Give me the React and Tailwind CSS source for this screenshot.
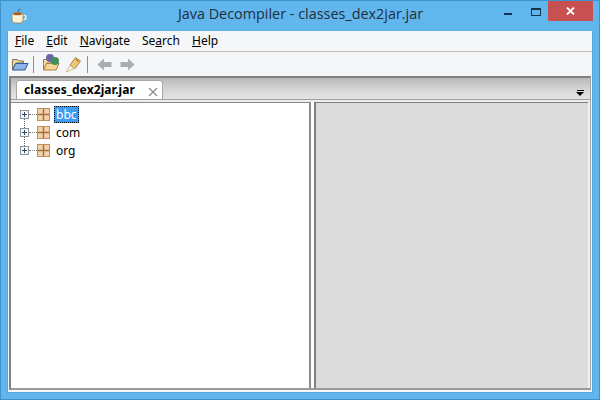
import React from "react";

const FolderOpen = () => (
  <svg width="18" height="16" viewBox="0 0 18 16">
    <path d="M1.500 3.500h5l1 1.500h5v2H5L2.500 13.500h-1z" fill="#e9d9a8" stroke="#8a7444" />
    <path d="M4.500 7.500h12.500l-3 6.500H1.500z" fill="#8fb4e6" stroke="#2c5a9e" />
  </svg>
);

const FolderTan = () => (
  <svg width="18" height="16" viewBox="0 0 18 16">
    <path d="M1.500 3.500h5l1 1.500h5v2H5L2.500 13.500h-1z" fill="#f0dca8" stroke="#a07a3c" />
    <path d="M4.500 7.500h12.500l-3 6.500H1.500z" fill="#f6d694" stroke="#a8803c" />
  </svg>
);

const PackageIcon = () => (
  <svg width="13" height="13" viewBox="0 0 13 13">
    <rect x="0.500" y="0.500" width="12" height="12" fill="#f2d2ac" stroke="#bd8f5c" />
    <path d="M6.500 1v11M1 6.500h11" stroke="#a86e38" strokeWidth="1.400" />
  </svg>
);

const TreeRow = ({ label, selected, last }) => (
  <div className="flex items-center h-[18px] relative">
    <div className="w-[9px] h-[9px] ml-[9px] border border-[#8a949c] bg-[#f6f6f6] flex items-center justify-center relative shrink-0">
      <div className="w-[5px] h-px bg-[#33475f]" />
      <div className="w-px h-[5px] bg-[#33475f] absolute left-[3px] top-[1px]" />
    </div>
    <div className="w-[8px] border-t border-dotted border-[#777]" />
    <div className="flex shrink-0"><PackageIcon /></div>
    {selected ? (
      <span className="ml-[4px] px-[1px] h-[17px] leading-[15px] bg-[#3d9bf3] text-white border border-dotted border-black">{label}</span>
    ) : (
      <span className="ml-[5px] px-[1px] leading-[15px]">{label}</span>
    )}
    {!last && <div className="absolute left-[13px] top-[14px] h-[9px] border-l border-dotted border-[#555]" />}
  </div>
);

export default function App() {
  return (
    <div className="w-[600px] h-[400px] bg-[#62b6ee] border border-[#3f93cc] flex flex-col overflow-hidden text-[12px] text-black font-['Liberation_Sans',sans-serif]">
      {/* title bar */}
      <div className="h-[30px] flex shrink-0">
        <div className="w-[30px] pl-[10px] pt-[7px] shrink-0">
          <svg width="16" height="17" viewBox="0 0 16 17">
            <path d="M7 5 Q7 2 9 1" fill="none" stroke="#3f6a8c" strokeWidth="1.200" />
            <path d="M12 7.500h1.500q1.500 0 1.500 2t-3 2.500" fill="none" stroke="#f5e9c8" strokeWidth="1.500" />
            <path d="M1 6q0-1.500 5.500-1.500T12 6v6q0 3-3 3H4q-3 0-3-3z" fill="#fbf1d4" stroke="#8a7444" strokeWidth="0.700" />
            <ellipse cx="6.500" cy="6" rx="4.500" ry="1.200" fill="#b8541e" />
          </svg>
        </div>
        <div className="flex-1 text-center pt-[4px] pl-[78px] text-[14.4px] leading-[18px] text-[#1f2f3c] font-['Open_Sans',sans-serif] whitespace-nowrap">
          Java Decompiler - classes_dex2jar.jar
        </div>
        <div className="w-[32px] flex justify-center pt-[12px] shrink-0">
          <div className="w-[8px] h-[2px] bg-[#15354f]" />
        </div>
        <div className="w-[23px] flex justify-center pt-[7px] shrink-0">
          <div className="w-[10px] h-[8px] border border-t-2 border-[#15354f]" />
        </div>
        <div className="w-[45px] h-[20px] bg-[#c75050] flex items-center justify-center ml-px mr-[6px] shrink-0">
          <svg width="9" height="8" viewBox="0 0 9 8">
            <path d="M1 0.500 8 7.500M8 0.500 1 7.500" stroke="#fff" strokeWidth="1.800" />
          </svg>
        </div>
      </div>

      {/* client area */}
      <div className="mx-[6px] mb-[6px] flex-1 min-h-0 flex flex-col bg-[#f4f6f8] border-x border-b border-[#56a6dd]">
        {/* menu */}
        <div className="h-[21px] flex items-center gap-[12px] pl-[7px] border-b border-[#bdbdbd] shrink-0 font-['Noto_Sans',sans-serif]">
          <span><u>F</u>ile</span>
          <span><u>E</u>dit</span>
          <span><u>N</u>avigate</span>
          <span>Se<u>a</u>rch</span>
          <span><u>H</u>elp</span>
        </div>
        {/* toolbar */}
        <div className="h-[24px] flex items-center pl-[3px] shrink-0">
          <FolderOpen />
          <div className="w-px h-[17px] bg-[#8e8e8e] ml-[4px] mr-[8px]" />
          <div className="relative">
            <FolderTan />
            <div className="absolute left-[4px] top-[-2px] w-[8px] h-[8px] rounded-full bg-[#6c64a8]" />
            <div className="absolute left-[9px] top-[1px] w-[8px] h-[8px] rounded-full bg-[#3f8f5c]" />
          </div>
          <svg className="ml-[5px]" width="17" height="17" viewBox="0 0 17 17">
            <path d="M10.500 1.500l5 3.500-5.500 7.500-5-3.500z" fill="#f0c878" stroke="#a8843c" />
            <path d="M1 16l4-6.500 4.500 3z" fill="#faf6e0" stroke="#c8c09c" />
            <path d="M11 3.500l2.500 2" stroke="#b8742c" strokeWidth="1.500" />
          </svg>
          <div className="w-px h-[17px] bg-[#8e8e8e] ml-[5px] mr-[9px]" />
          <svg width="15" height="13" viewBox="0 0 15 13">
            <path d="M7 0.500v3.500h7.500v5H7v3.500L0.500 6.500z" fill="#a9aeb0" />
          </svg>
          <svg className="ml-[8px]" width="15" height="13" viewBox="0 0 15 13">
            <path d="M8 0.500v3.500H0.500v5H8v3.500l6.500-6z" fill="#a9aeb0" />
          </svg>
        </div>

        {/* tab pane */}
        <div className="flex-1 min-h-0 mx-px mb-[2px] border-t-2 border-l-2 border-r border-b-2 border-t-[#808080] border-l-[#808080] border-r-[#a4a4a4] border-b-[#9a9a9a] flex flex-col bg-[#f0f0f0]">
          <div className="h-[21px] flex items-end pl-[5px] bg-gradient-to-b from-[#b8b8b8] via-[#d4d4d4] to-[#e4e4e4] shrink-0 relative">
            <div className="w-[147px] h-[19px] bg-white border border-b-0 border-[#a8a8a8] rounded-t-[3px] flex items-center pl-[7px] font-bold font-['Noto_Sans',sans-serif] tracking-[0.1px] relative">
              classes_dex2jar.jar
              <svg className="absolute left-[131px] top-[6px]" width="10" height="10" viewBox="0 0 10 10">
                <path d="M1 1 9 9M9 1 1 9" stroke="#8c8c8c" strokeWidth="1.200" />
              </svg>
            </div>
            <div className="absolute right-[6px] bottom-[3px] flex flex-col items-center">
              <div className="w-[7px] h-px bg-black mb-px" />
              <div className="w-0 h-0 border-x-[4px] border-x-transparent border-t-[4px] border-t-black" />
            </div>
          </div>
          <div className="h-px bg-[#a0a0a0] shrink-0" />
          <div className="h-[2px] bg-[#ececec] shrink-0" />
          <div className="flex-1 min-h-0 flex">
            {/* tree */}
            <div className="w-[300px] bg-white border-t-[1.500px] border-r-2 border-[#8c8c8c] pt-[2px] font-['Noto_Sans',sans-serif]">
              <TreeRow label="bbc" selected />
              <TreeRow label="com" />
              <TreeRow label="org" last />
            </div>
            <div className="w-[3px] bg-white" />
            {/* empty panel */}
            <div className="flex-1 bg-[#dcdcdc] border-t-[1.500px] border-l-2 border-[#808080] mr-[2px]" />
          </div>
        </div>
      </div>
    </div>
  );
}
